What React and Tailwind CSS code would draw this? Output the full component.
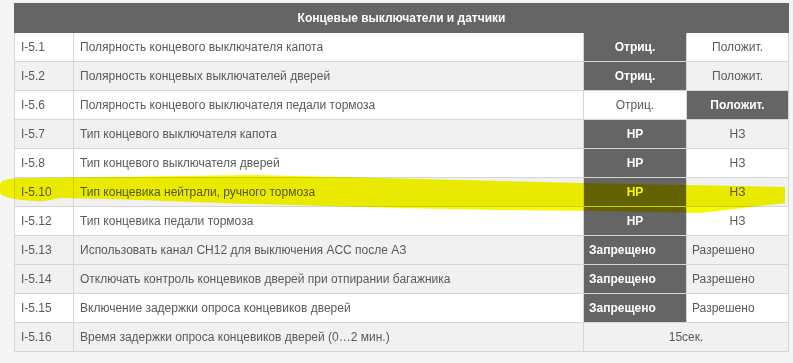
import React from 'react'

const rows = [
  { id: 'I-5.1', text: 'Полярность концевого выключателя капота', a: 'Отриц.', b: 'Положит.', on: 'a', gray: false },
  { id: 'I-5.2', text: 'Полярность концевых выключателей дверей', a: 'Отриц.', b: 'Положит.', on: 'a', gray: true },
  { id: 'I-5.6', text: 'Полярность концевого выключателя педали тормоза', a: 'Отриц.', b: 'Положит.', on: 'b', gray: false },
  { id: 'I-5.7', text: 'Тип концевого выключателя капота', a: 'НР', b: 'НЗ', on: 'a', gray: true },
  { id: 'I-5.8', text: 'Тип концевого выключателя дверей', a: 'НР', b: 'НЗ', on: 'a', gray: false },
  { id: 'I-5.10', text: 'Тип концевика нейтрали, ручного тормоза', a: 'НР', b: 'НЗ', on: 'a', gray: true },
  { id: 'I-5.12', text: 'Тип концевика педали тормоза', a: 'НР', b: 'НЗ', on: 'a', gray: false },
  { id: 'I-5.13', text: 'Использовать канал CH12 для выключения ACC после АЗ', a: 'Запрещено', b: 'Разрешено', on: 'a', gray: true, left: true },
  { id: 'I-5.14', text: 'Отключать контроль концевиков дверей при отпирании багажника', a: 'Запрещено', b: 'Разрешено', on: 'a', gray: true, left: true },
  { id: 'I-5.15', text: 'Включение задержки опроса концевиков дверей', a: 'Запрещено', b: 'Разрешено', on: 'a', gray: false, left: true },
]

function ValueCell({ value, active, left }) {
  const align = left ? 'text-left pl-[5px]' : 'text-center'
  if (active) {
    return <td className={`border border-[#d6d6d6] bg-[#656565] text-white font-bold ${align}`}>{value}</td>
  }
  return <td className={`border border-[#d6d6d6] ${align}`}>{value}</td>
}

export default function App() {
  return (
    <div className="relative w-[793px] h-[363px] bg-[#f5f5f5] pl-[14px] pt-[3px] overflow-hidden" style={{ fontFamily: '"Liberation Sans", Arial, sans-serif' }}>
      <table className="w-[774px] border-collapse table-fixed text-[12px] text-[#5a5a5a]">
        <colgroup>
          <col className="w-[59px]" />
          <col className="w-[510px]" />
          <col className="w-[103px]" />
          <col className="w-[102px]" />
        </colgroup>
        <thead>
          <tr className="h-[29px]">
            <th colSpan={4} className="bg-[#656565] text-white font-bold text-center border border-[#656565]">
              Концевые выключатели и датчики
            </th>
          </tr>
        </thead>
        <tbody>
          {rows.map((r) => (
            <tr key={r.id} className={`h-[29px] ${r.gray ? 'bg-[#f1f1f1]' : 'bg-white'}`}>
              <td className="border border-[#d6d6d6] px-[6px]">{r.id}</td>
              <td className="border border-[#d6d6d6] px-[6px]">{r.text}</td>
              <ValueCell value={r.a} active={r.on === 'a'} left={r.left} />
              <ValueCell value={r.b} active={r.on === 'b'} left={r.left} />
            </tr>
          ))}
          <tr className="h-[29px] bg-[#f1f1f1]">
            <td className="border border-[#d6d6d6] px-[6px]">I-5.16</td>
            <td className="border border-[#d6d6d6] px-[6px]">Время задержки опроса концевиков дверей (0…2 мин.)</td>
            <td colSpan={2} className="border border-[#d6d6d6] text-center">15сек.</td>
          </tr>
        </tbody>
      </table>

      {/* marker highlight over row I-5.10 */}
      <svg className="absolute left-0 top-0 pointer-events-none mix-blend-multiply" width="793" height="363">
        <path
          d="M0 186 C0 180 6 178 30 178 L110 177 L250 175 L420 179 L580 183 L785 187 L785 203 L700 213 L600 211 L500 210 L400 208 L250 204 L110 199 L60 198 C52 199 46 202 36 201 C14 200 0 197 0 192 Z"
          fill="#f8f800"
        />
      </svg>
    </div>
  )
}
